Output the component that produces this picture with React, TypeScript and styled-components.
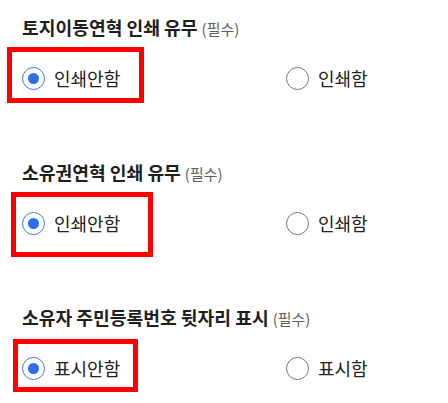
import React from "react";
import styled, { createGlobalStyle } from "styled-components";

const Global = createGlobalStyle`
  html, body { margin: 0; padding: 0; background: #fff; }
  body { font-family: "Noto Sans CJK KR", "Noto Sans", sans-serif; color: #1f1f1f; }
`;

const Page = styled.div`
  display: flex;
  flex-direction: column;
  gap: 55px;
  width: 448px;
  min-height: 403px;
  box-sizing: border-box;
  padding-bottom: 23px;
`;

const Section = styled.section`
  position: relative;
  box-sizing: border-box;
  height: 90px;
  padding: 14px 0 0 22px;
`;

const Title = styled.div`
  height: 26px;
  font-size: 18.2px;
  line-height: 26px;
  font-weight: 700;
  color: #1f1f1f;
  white-space: nowrap;
`;

const Required = styled.span`
  font-size: 15px;
  line-height: 20px;
  font-weight: 400;
  color: #5f5f5f;
  margin-left: 4px;
`;

const Options = styled.div`
  display: grid;
  grid-template-columns: 264px auto;
  margin-top: 26px;
  height: 24px;
  align-items: center;
`;

const Option = styled.label`
  display: flex;
  align-items: center;
  gap: 9px;
  font-size: 18px;
  line-height: 24px;
  color: #222;
`;

const Radio = styled.span<{ $checked?: boolean }>`
  box-sizing: border-box;
  width: 23px;
  height: 23px;
  border-radius: 50%;
  border: ${(p) => (p.$checked ? "1.5px solid #3a7bec" : "1.2px solid #777")};
  display: flex;
  align-items: center;
  justify-content: center;
  &::after {
    content: "";
    display: ${(p) => (p.$checked ? "block" : "none")};
    width: 11px;
    height: 11px;
    border-radius: 50%;
    background: #2f6fe6;
  }
`;

const Highlight = styled.div<{ $l: number; $t: number; $w: number; $h: number }>`
  position: absolute;
  left: ${(p) => p.$l}px;
  top: ${(p) => p.$t}px;
  width: ${(p) => p.$w}px;
  height: ${(p) => p.$h}px;
  box-sizing: border-box;
  border: 5px solid #f00;
  pointer-events: none;
`;

const data = [
  { title: "토지이동연혁 인쇄 유무", a: "인쇄안함", b: "인쇄함", box: [7, 47, 137, 56] },
  { title: "소유권연혁 인쇄 유무", a: "인쇄안함", b: "인쇄함", box: [11, 47, 142, 65] },
  { title: "소유자 주민등록번호 뒷자리 표시", a: "표시안함", b: "표시함", box: [13, 49, 125, 53] },
];

export default function App() {
  return (
    <>
      <Global />
      <Page>
        {data.map((d) => (
          <Section key={d.title}>
            <Title>
              {d.title}
              <Required>(필수)</Required>
            </Title>
            <Options>
              <Option>
                <Radio $checked />
                {d.a}
              </Option>
              <Option>
                <Radio />
                {d.b}
              </Option>
            </Options>
            <Highlight $l={d.box[0]} $t={d.box[1]} $w={d.box[2]} $h={d.box[3]} />
          </Section>
        ))}
      </Page>
    </>
  );
}
